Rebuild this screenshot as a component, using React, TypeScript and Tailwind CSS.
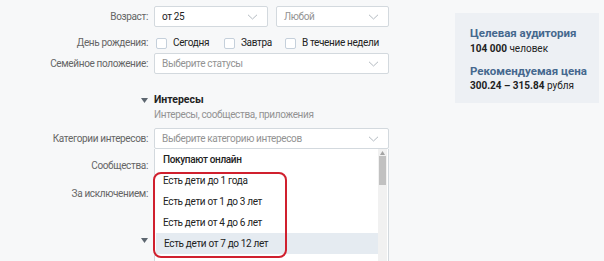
import React from "react"

function Chevron() {
    return (
        <svg width="11" height="6" viewBox="0 0 11 6" className="shrink-0">
            <path d="M1 0.8l4.5 4.2 4.5-4.2" fill="none" stroke="#b3bac1" strokeWidth="1" />
        </svg>
    )
}

function Caret() {
    return (
        <svg width="7" height="5" viewBox="0 0 7 5">
            <path d="M0 0h7L3.5 5z" fill="#5d6670" />
        </svg>
    )
}

function Select({ value, placeholder, className = "" }: { value?: string; placeholder?: string; className?: string }) {
    return (
        <div className={`h-[21px] bg-white border border-[#d3d9de] rounded-[2px] flex items-center justify-between pl-[7px] pr-[9px] ${className}`}>
            {value ? (
                <span className="text-[#222]">{value}</span>
            ) : (
                <span className="text-[#939393]">{placeholder}</span>
            )}
            <Chevron />
        </div>
    )
}

function Check({ label, className = "" }: { label: string; className?: string }) {
    return (
        <div className={`flex items-center gap-[6px] whitespace-nowrap ${className}`}>
            <span className="size-[11px] border border-[#c5d0db] bg-white rounded-[2px] shrink-0" />
            <span className="text-[#222] leading-none">{label}</span>
        </div>
    )
}

function Row({ label, children, className = "" }: { label?: React.ReactNode; children?: React.ReactNode; className?: string }) {
    return (
        <div className={`grid grid-cols-[148px_235px] gap-x-[6px] items-center ${className}`}>
            <div className="text-right text-[#656565] flex justify-end items-center whitespace-nowrap">{label}</div>
            <div className="relative flex items-center">{children}</div>
        </div>
    )
}

const options = [
    "Есть дети до 1 года",
    "Есть дети от 1 до 3 лет",
    "Есть дети от 4 до 6 лет",
    "Есть дети от 7 до 12 лет",
]

export default function App() {
    return (
        <div className="w-[604px] h-[261px] overflow-hidden bg-[#f7f8f9] flex font-['Roboto','Liberation_Sans',sans-serif] text-[10px] leading-[14px]">
            <div className="w-[389px] shrink-0 tracking-[-0.35px]">
                <Row label="Возраст:" className="mt-[6px] h-[20px]">
                    <div className="flex gap-[8px] w-full">
                        <Select value="от 25" className="w-[114px] h-[20px]" />
                        <Select placeholder="Любой" className="w-[113px] h-[20px]" />
                    </div>
                </Row>

                <Row label="День рождения:" className="mt-[10px] h-[11px]">
                    <div className="flex items-center ml-[2px]">
                        <Check label="Сегодня" className="w-[68px]" />
                        <Check label="Завтра" className="w-[61px]" />
                        <Check label="В течение недели" />
                    </div>
                </Row>

                <Row label="Семейное положение:" className="mt-[6px] h-[20px]">
                    <Select placeholder="Выберите статусы" className="w-full h-[20px]" />
                </Row>

                <Row label={<Caret />} className="mt-[20px] h-[14px]">
                    <span className="font-bold text-[#222] text-[10.5px] tracking-normal">Интересы</span>
                </Row>
                <Row className="mt-[1px] h-[14px]">
                    <span className="text-[#939393]">Интересы, сообщества, приложения</span>
                </Row>

                <Row label="Категории интересов:" className="mt-[6px] h-[21px] relative z-10">
                    <Select placeholder="Выберите категорию интересов" className="w-full" />
                    <div className="absolute left-0 top-[21px] w-full h-[120px] bg-white border-x border-[#d3d9de] flex">
                        <div className="flex-1 flex flex-col relative">
                            <div className="h-[21px] pl-[8px] flex items-center font-medium text-[#222]">Покупают онлайн</div>
                            {options.map((o, i) => (
                                <div
                                    key={o}
                                    className={`h-[21px] pl-[8px] flex items-center text-[#222] ${i === 3 ? "bg-[#e5ebf1] ml-[1px] pl-[7px]" : ""}`}
                                >
                                    {o}
                                </div>
                            ))}
                            <div className="absolute left-[-2px] top-[23px] w-[134px] h-[86px] border-2 border-[#d0202e] rounded-[8px]" />
                        </div>
                        <div className="w-[9px] mr-[1px] bg-[#f1f1f1] flex flex-col items-center">
                            <svg width="5" height="4" viewBox="0 0 5 4" className="mt-[2px]">
                                <path d="M0 4h5L2.5 0z" fill="#a3a3a3" />
                            </svg>
                            <div className="w-[7px] h-[29px] mt-[1px] bg-[#c1c1c1]" />
                        </div>
                    </div>
                </Row>

                <Row label="Сообщества:" className="mt-[10px] h-[14px]" />
                <Row label="За исключением:" className="mt-[14px] h-[14px]" />
                <Row label={<Caret />} className="mt-[32px] h-[14px]" />
            </div>

            <div className="ml-[66px] mt-[13px] w-[144px] h-[90px] bg-[#edf0f4] pl-[15px] pt-[13px]">
                <div className="font-bold text-[11.5px] leading-[15px] text-[#45688e]">Целевая аудитория</div>
                <div className="text-[#222] leading-[14px] mt-[1px]">
                    <b>104 000</b> человек
                </div>
                <div className="font-bold text-[11.5px] leading-[15px] text-[#45688e] mt-[8px]">Рекомендуемая цена</div>
                <div className="text-[#222] leading-[14px]">
                    <b>300.24 – 315.84</b> рубля
                </div>
            </div>
        </div>
    )
}
